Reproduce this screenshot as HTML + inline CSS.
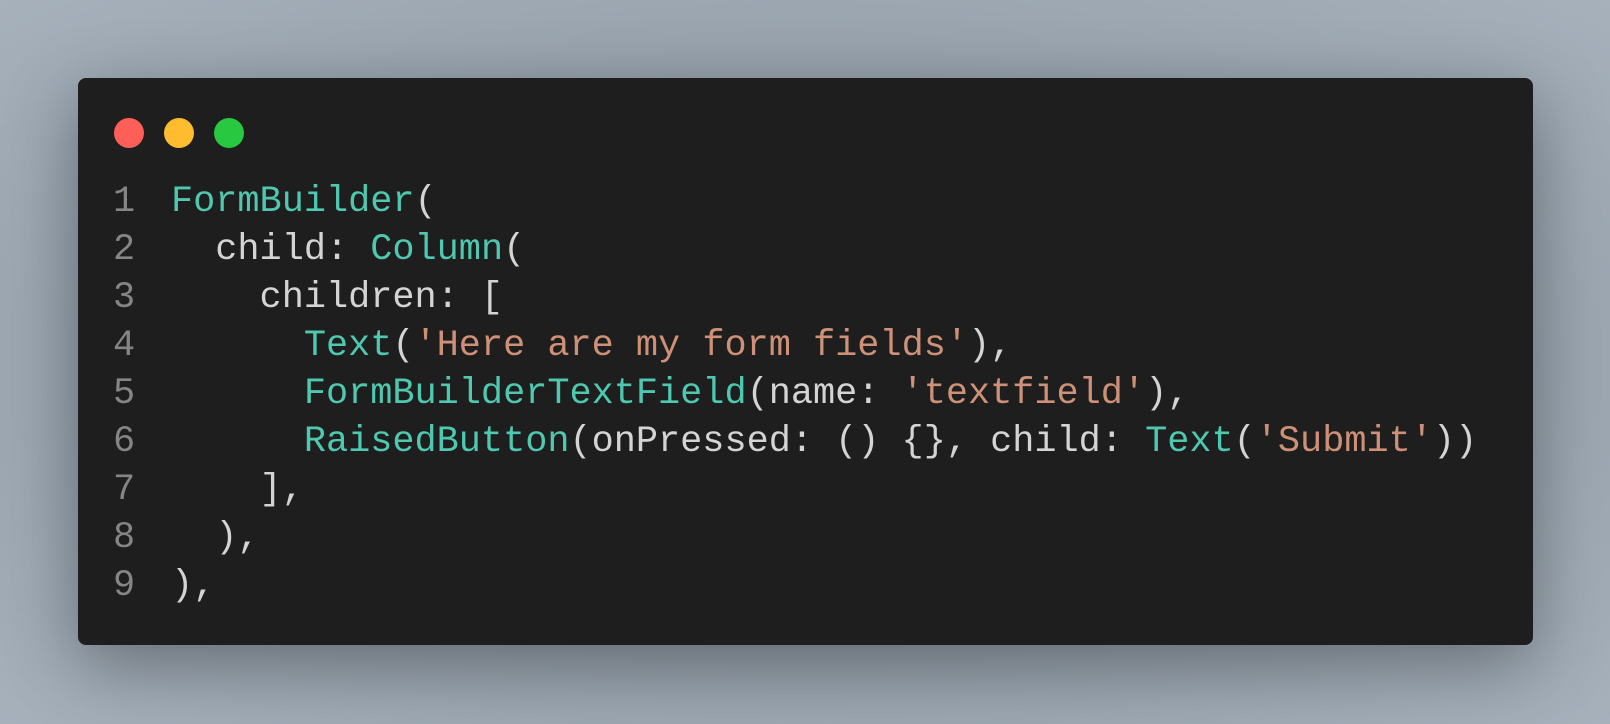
<!DOCTYPE html>
<html><head><meta charset="utf-8"><style>
html,body{margin:0;padding:0}
body{width:1610px;height:724px;overflow:hidden;background:radial-gradient(ellipse at 50% 50%,#7d8793 0%,#98a3ae 60%,#a6b1bc 100%);position:relative}
.win{position:absolute;left:78px;top:78px;width:1455px;height:567px;background:#1e1e1e;border-radius:8px;box-shadow:0 20px 70px rgba(0,0,0,0.35)}
.dot{position:absolute;top:40px;width:30px;height:30px;border-radius:50%}
pre{position:absolute;left:0;top:100px;margin:0;font-family:"Liberation Mono",monospace;font-size:36.9px;line-height:48px;color:#d4d4d4}
.n{display:inline-block;width:93px;color:#858585}
.n span{display:inline-block;width:58px;text-align:left;margin-left:35px}
.t{color:#4ec9b0}.s{color:#ce9178}
</style></head><body>
<div class="win">
<div class="dot" style="left:36px;background:#ff5f57"></div>
<div class="dot" style="left:86px;background:#febc2e"></div>
<div class="dot" style="left:136px;background:#28c840"></div>
<pre><span class="n"><span>1</span></span><span class="t">FormBuilder</span>(
<span class="n"><span>2</span></span>  child: <span class="t">Column</span>(
<span class="n"><span>3</span></span>    children: [
<span class="n"><span>4</span></span>      <span class="t">Text</span>(<span class="s">'Here are my form fields'</span>),
<span class="n"><span>5</span></span>      <span class="t">FormBuilderTextField</span>(name: <span class="s">'textfield'</span>),
<span class="n"><span>6</span></span>      <span class="t">RaisedButton</span>(onPressed: () {}, child: <span class="t">Text</span>(<span class="s">'Submit'</span>))
<span class="n"><span>7</span></span>    ],
<span class="n"><span>8</span></span>  ),
<span class="n"><span>9</span></span>),</pre>
</div>
</body></html>
